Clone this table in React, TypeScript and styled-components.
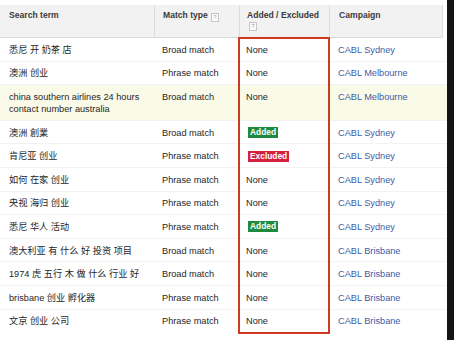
import React from "react";
import styled, { createGlobalStyle } from "styled-components";

const Global = createGlobalStyle`
  html, body { margin: 0; padding: 0; background: #fff; }
  body { font-family: "Liberation Sans", "Noto Sans CJK SC", Arial, sans-serif; }
`;

const COLS = "154px 85px 90px 1fr";

const Page = styled.div`
  display: flex;
  width: 454px;
  height: 340px;
  overflow: hidden;
  background: #fff;
`;

const Main = styled.div`
  width: 447px;
  padding-top: 5px;
  display: flex;
  flex-direction: column;
`;

const Edge = styled.div`
  flex: 1;
  background: #141414;
`;

const Header = styled.div`
  display: grid;
  grid-template-columns: ${COLS};
  width: 443px;
  height: 33px;
  box-sizing: border-box;
  background: #f2f2f2;
  border-bottom: 1px solid #dadada;
  border-right: 1px solid #dcdcdc;
`;

const HeadCell = styled.div<{ $pad?: number; $divider?: boolean }>`
  padding: 5px 6px 0 ${(p) => p.$pad ?? 8}px;
  font-size: 8.6px;
  line-height: 11px;
  font-weight: bold;
  color: #3a3a3a;
  border-left: ${(p) => (p.$divider ? "1px solid #dcdcdc" : "none")};
`;

const Help = styled.span`
  display: inline-flex;
  align-items: center;
  justify-content: center;
  width: 6px;
  height: 7px;
  margin-left: 3px;
  border: 1px solid #c6c6c6;
  background: #fafafa;
  color: #a8a8a8;
  font-size: 6px;
  line-height: 7px;
  font-weight: normal;
  vertical-align: -1px;
`;

const HelpBlock = styled(Help)`
  display: flex;
  margin: 1px 0 0 2px;
`;

const Body = styled.div`
  position: relative;
`;

const Row = styled.div<{ $hl?: boolean }>`
  display: grid;
  grid-template-columns: ${COLS};
  align-items: start;
  background: ${(p) => (p.$hl ? "#fafae8" : "#fff")};
  border-top: 1px solid #f2f2f2;
  margin-top: -1px;
  &:first-child {
    border-top: none;
    margin-top: 0;
  }
`;

const Cell = styled.div<{ $pad?: number }>`
  padding: 5.8px 6px 5.8px ${(p) => p.$pad ?? 8}px;
  font-size: 9.2px;
  line-height: 12px;
  height: 12px;
  color: #262626;
`;

const TermCell = styled(Cell)`
  height: auto;
`;

const Link = styled.span`
  color: #3d5ca6;
`;

const Badge = styled.span<{ $kind: "added" | "excluded" }>`
  display: inline-block;
  padding: 0 2px;
  height: 11px;
  line-height: 11px;
  font-size: 8.4px;
  font-weight: bold;
  color: #fff;
  background: ${(p) => (p.$kind === "added" ? "#1f8a3f" : "#d3213d")};
  vertical-align: top;
  margin: 0.5px 0 0 2px;
`;

const Highlight = styled.div`
  position: absolute;
  left: 238px;
  width: 92px;
  top: -1px;
  bottom: -1px;
  box-sizing: border-box;
  border: 2px solid #cc3a24;
  pointer-events: none;
`;

type Status = "none" | "added" | "excluded";

const rows: { term: string; match: string; status: Status; campaign: string; hl?: boolean }[] = [
  { term: "悉尼 开 奶茶 店", match: "Broad match", status: "none", campaign: "CABL Sydney" },
  { term: "澳洲 创业", match: "Phrase match", status: "none", campaign: "CABL Melbourne" },
  {
    term: "china southern airlines 24 hours contact number australia",
    match: "Broad match",
    status: "none",
    campaign: "CABL Melbourne",
    hl: true,
  },
  { term: "澳洲 創業", match: "Broad match", status: "added", campaign: "CABL Sydney" },
  { term: "肯尼亚 创业", match: "Phrase match", status: "excluded", campaign: "CABL Sydney" },
  { term: "如何 在家 创业", match: "Phrase match", status: "none", campaign: "CABL Sydney" },
  { term: "央视 海归 创业", match: "Phrase match", status: "none", campaign: "CABL Sydney" },
  { term: "悉尼 华人 活动", match: "Phrase match", status: "added", campaign: "CABL Sydney" },
  { term: "澳大利亚 有 什么 好 投资 项目", match: "Broad match", status: "none", campaign: "CABL Brisbane" },
  { term: "1974 虎 五行 木 做 什么 行业 好", match: "Broad match", status: "none", campaign: "CABL Brisbane" },
  { term: "brisbane 创业 孵化器", match: "Phrase match", status: "none", campaign: "CABL Brisbane" },
  { term: "文京 创业 公司", match: "Phrase match", status: "none", campaign: "CABL Brisbane" },
];

function StatusCell({ status }: { status: Status }) {
  if (status === "added") return <Badge $kind="added">Added</Badge>;
  if (status === "excluded") return <Badge $kind="excluded">Excluded</Badge>;
  return <>None</>;
}

export default function App() {
  return (
    <>
      <Global />
      <Page>
        <Main>
          <Header>
            <HeadCell $pad={9}>Search term</HeadCell>
            <HeadCell $divider>
              Match type<Help>?</Help>
            </HeadCell>
            <HeadCell $divider $pad={7}>
              Added / Excluded
              <HelpBlock>?</HelpBlock>
            </HeadCell>
            <HeadCell $divider $pad={9}>Campaign</HeadCell>
          </Header>
          <Body>
            {rows.map((r, i) => (
              <Row key={i} $hl={r.hl}>
                <TermCell $pad={9}>{r.term}</TermCell>
                <Cell>{r.match}</Cell>
                <Cell $pad={7}>
                  <StatusCell status={r.status} />
                </Cell>
                <Cell $pad={9}>
                  <Link>{r.campaign}</Link>
                </Cell>
              </Row>
            ))}
            <Highlight />
          </Body>
        </Main>
        <Edge />
      </Page>
    </>
  );
}
